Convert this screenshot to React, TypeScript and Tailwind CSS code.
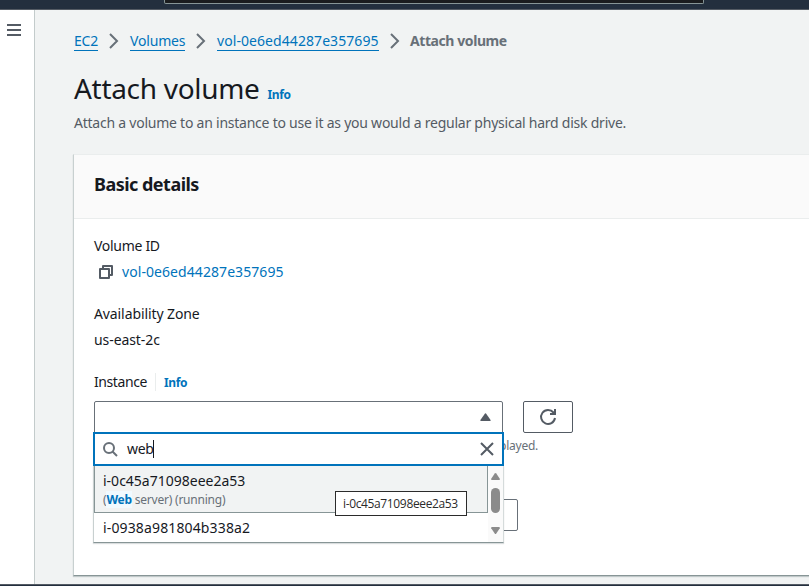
import type { ReactNode } from "react";

function Chevron() {
  return (
    <svg width="10" height="16" viewBox="0 0 10 16" fill="none" stroke="#687078" strokeWidth="2" className="shrink-0">
      <path d="M1 1l7 7-7 7" />
    </svg>
  );
}

function Crumb({ children, className }: { children: ReactNode; className: string }) {
  return (
    <a className={`block h-[21px] shrink-0 whitespace-nowrap border-b border-[#0073bb] text-[#0073bb] ${className}`}>
      {children}
    </a>
  );
}

function CopyIcon() {
  return (
    <svg width="14" height="14" viewBox="0 0 14 14" fill="none" stroke="#545b64" strokeWidth="2" strokeLinejoin="round" className="shrink-0">
      <path d="M4 3V1h9v9h-2" />
      <path d="M1 4h9v9H1z" />
    </svg>
  );
}

function Dropdown() {
  return (
    <div className="absolute left-[-1px] top-[31px] z-10 w-[411px]">
      <div className="flex h-[34px] items-center border-2 border-[#0073bb] bg-white pl-2 pr-2">
        <svg width="15" height="15" viewBox="0 0 15 15" fill="none" stroke="#687078" strokeWidth="2">
          <circle cx="6" cy="6" r="5" />
          <path d="M9.5 9.5l4.5 4.5" />
        </svg>
        <span className="ml-[9px] w-[26px] text-[14px] leading-[22px] tracking-[-0.3px]">web</span>
        <span className="h-[18px] w-px bg-[#16191f]" />
        <svg width="14" height="14" viewBox="0 0 14 14" fill="none" stroke="#545b64" strokeWidth="2" className="ml-auto">
          <path d="M1 1l12 12M13 1L1 13" />
        </svg>
      </div>
      <div className="flex h-[77px] border-b border-l border-r border-b-[#879596] border-l-[#c8d0d0] border-r-[#d5dbdb] bg-white shadow-[0_1px_1px_rgba(0,28,36,0.15)]">
        <div className="w-[394px]">
          <div className="h-[47px] border-b border-l border-r border-[#879596] bg-[#f1f3f3] pl-2 pt-[4px]">
            <div className="text-[14px] leading-[22px]">i-0c45a71098eee2a53</div>
            <div className="text-[12px] leading-4 tracking-[-0.22px] text-[#687078]">
              (<b className="bg-[#f1faff] text-[#0073bb]">Web</b> server) (running)
            </div>
          </div>
          <div className="pl-[9px] pt-1 text-[14px] leading-[22px] tracking-[0.14px]">i-0938a981804b338a2</div>
        </div>
        <div className="flex flex-1 flex-col items-center bg-[#fafafa] pt-[7px]">
          <svg width="9" height="7" viewBox="0 0 9 7" fill="#8b8b8b"><path d="M3.7.6Q4.5-.4 5.3.6L8.8 5.8Q9 7 8 7H1Q0 7 .2 5.8z" /></svg>
          <div className="mt-2 h-[25px] w-[9px] rounded-full bg-[#8b8b8b]" />
          <svg width="9" height="7" viewBox="0 0 9 7" fill="#8b8b8b" className="mt-[14px]"><path d="M3.7 6.4Q4.5 7.4 5.3 6.4L8.8 1.2Q9 0 8 0H1Q0 0 .2 1.2z" /></svg>
        </div>
      </div>
      <div className="absolute left-[242px] top-[59px] flex h-[25px] w-[132px] items-center border border-[#2b2b2b] bg-white pl-[7px] font-['Open_Sans','Noto_Sans',sans-serif] text-[12px] tracking-[-0.36px] text-[#2b2b2b]">
        i-0c45a71098eee2a53
      </div>
    </div>
  );
}

export default function App() {
  return (
    <div className="flex h-[586px] w-[809px] flex-col overflow-hidden bg-[#f1f3f3] font-['Noto_Sans',sans-serif] text-[14px] leading-[22px] text-[#16191f]">
      <header className="h-[10px] shrink-0 border-b border-[#545b64] bg-[#232f3e]">
        <div className="ml-[164px] h-1 w-[540px] rounded-b-[2px] border border-t-0 border-[#879596] bg-[#1a1c1e]" />
      </header>
      <div className="flex min-h-0 flex-1">
        <aside className="w-[35px] shrink-0 border-r border-[#c3cbcb] bg-white pl-[7px] pt-[14px]">
          <div className="flex w-[14px] flex-col gap-[3px]">
            <i className="h-[2px] bg-[#545b64]" />
            <i className="h-[2px] bg-[#545b64]" />
            <i className="h-[2px] bg-[#545b64]" />
          </div>
        </aside>
        <main className="flex min-w-0 flex-1 flex-col overflow-hidden pl-[38px] pt-5">
          <nav className="ml-px flex h-[22px] items-start">
            <Crumb className="w-6 tracking-[-0.2px]">EC2</Crumb>
            <span className="ml-[11px] mt-[3px] flex w-[21px]"><Chevron /></span>
            <Crumb className="w-[55px] tracking-[-0.18px]">Volumes</Crumb>
            <span className="ml-[11px] mt-[3px] flex w-[21px]"><Chevron /></span>
            <Crumb className="w-[162px] tracking-[0.07px]">vol-0e6ed44287e357695</Crumb>
            <span className="ml-[11px] mt-[3px] flex w-[21px]"><Chevron /></span>
            <b className="-ml-px whitespace-nowrap tracking-[-0.42px] text-[#687078]">Attach volume</b>
          </nav>
          <div className="ml-px mt-[18px] flex h-9 items-baseline whitespace-nowrap">
            <h1 className="w-[193.5px] text-[28px] leading-9 tracking-[-0.3px]">Attach volume</h1>
            <a className="text-[12px] font-bold tracking-[-0.35px] text-[#0073bb]">Info</a>
          </div>
          <p className="ml-px mt-[6px] whitespace-nowrap tracking-[-0.236px] text-[#545b64]">
            Attach a volume to an instance to use it as you would a regular physical hard disk drive.
          </p>
          <section className="mt-5 h-[422px] w-[760px] shrink-0 border border-b-[#879596] border-l-[#c8d0d0] border-t-[#eaeded] bg-white shadow-[0_1px_1px_rgba(0,28,36,0.2)]">
            <h2 className="h-16 border-b border-[#eaeded] bg-[#fafafa] pl-5 pt-[18px] text-[18px] font-bold tracking-[-0.52px]">Basic details</h2>
            <div className="pl-5 pt-4">
              <div className="tracking-[-0.3px]">Volume ID</div>
              <div className="mt-1 flex items-center tracking-[0.07px] text-[#0073bb]">
                <span className="ml-[5px] w-[23px]"><CopyIcon /></span>
                vol-0e6ed44287e357695
              </div>
              <div className="mt-5 tracking-[-0.1px]">Availability Zone</div>
              <div className="mt-1 tracking-[-0.08px]">us-east-2c</div>
              <div className="mt-5 flex items-center">
                <span className="w-[61px] tracking-[-0.42px]">Instance</span>
                <span className="h-[18px] border-l border-[#eaeded] pl-2 text-[12px] font-bold leading-5 tracking-[-0.35px] text-[#0073bb]">Info</span>
              </div>
              <div className="mt-2 flex gap-5">
                <div className="relative h-8 w-[409px] rounded-t-[2px] border border-[#687078]">
                  <svg width="11" height="8" viewBox="0 0 11 8" fill="#545b64" className="ml-[385px] mt-[11px]"><path d="M5 .6Q5.5 0 6 .6L10.6 7Q11 8 10 8H1Q0 8 .4 7z" /></svg>
                  <div className="absolute left-[-1px] top-[-1px]"><Dropdown /></div>
                </div>
                <button className="flex h-8 w-[50px] items-center justify-center rounded-[2px] border border-[#545b64]">
                  <svg width="18" height="18" viewBox="0 0 18 18" fill="none" stroke="#545b64" strokeWidth="2">
                    <path d="M16 10A7 7 0 1 1 14.5 4.5L16 6M16 1v5h-5" />
                  </svg>
                </button>
              </div>
              <p className="mt-1 w-[444px] whitespace-nowrap text-right text-[12px] leading-[18px] tracking-[-0.25px] text-[#687078]">Only instances in the same Availability Zone are displayed.</p>
              <div className="mt-[44px] h-8 w-[424px] rounded-[2px] border border-[#687078]" />
            </div>
          </section>
        </main>
      </div>
      <footer className="h-[2px] shrink-0 border-t border-[#545b64] bg-[#232f3e]" />
    </div>
  );
}
